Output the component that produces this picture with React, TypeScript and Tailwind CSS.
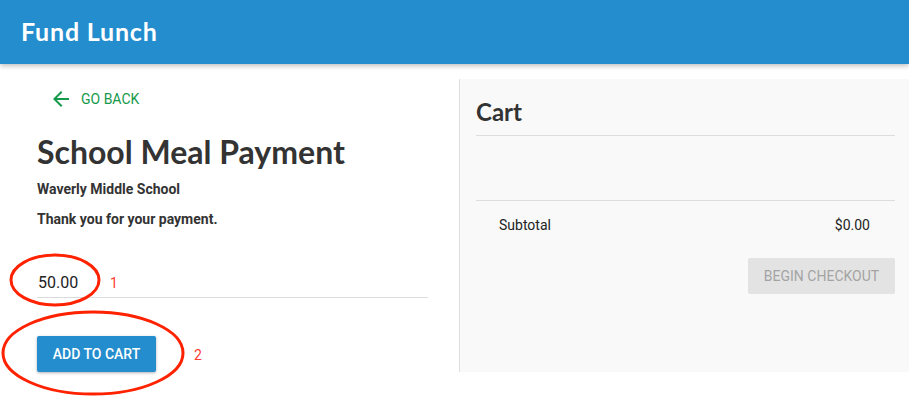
const heading = { fontFamily: '"Lato", "Open Sans", sans-serif' }
const body = { fontFamily: 'Roboto, "Liberation Sans", sans-serif' }

function BackArrow() {
  return (
    <svg width="24" height="24" viewBox="0 0 24 24" fill="currentColor">
      <path d="M20 11H7.83l5.59-5.59L12 4l-8 8 8 8 1.41-1.41L7.83 13H20v-2z" />
    </svg>
  )
}

export default function App() {
  return (
    <div className="relative w-[909px] h-[407px] overflow-hidden bg-white" style={body}>
      {/* Top bar */}
      <header className="h-16 bg-[#238dcd] flex items-center pl-[21px] shadow-[0_2px_5px_rgba(0,0,0,0.25)] relative z-10">
        <h1 className="text-white text-[25px] font-bold tracking-[0.8px]" style={heading}>
          Fund Lunch
        </h1>
      </header>

      <div className="flex">
        {/* Payment form */}
        <div className="w-[459px] pl-[37px] pr-[31px] pt-[21px]">
          <button className="flex items-center gap-[8px] pl-[12px] h-[28px] text-[#16994a] text-[14px] uppercase">
            <BackArrow />
            <span>Go Back</span>
          </button>

          <h2 className="mt-[19px] text-[32px] leading-[40px] font-bold text-[#333]" style={heading}>
            School Meal Payment
          </h2>
          <p className="mt-[9px] text-[14px] font-bold text-[#333] leading-[16px]">Waverly Middle School</p>
          <p className="mt-[14px] text-[14px] font-bold text-[#333] leading-[16px]">Thank you for your payment.</p>

          <div className="mt-[36px] border-b border-[#dcdcdc] h-[35px] flex items-center pt-[6px]">
            <span className="text-[16px] text-[#222] pl-px">50.00</span>
          </div>

          <button className="mt-[38px] h-[36px] w-[119px] bg-[#238dcd] text-white text-[14px] font-medium uppercase rounded-[2px] shadow-[0_1px_3px_rgba(0,0,0,0.3)]">
            Add to cart
          </button>
        </div>

        {/* Cart */}
        <aside className="mt-[15px] h-[293px] flex-1 bg-[#f9f9f9] border-l border-[#dedede] pl-[16px] pr-[14px]">
          <h2 className="pt-[19px] text-[24px] leading-[28px] font-bold text-[#333]" style={heading}>
            Cart
          </h2>
          <div className="mt-[9px] border-t border-[#ddd] h-[65px]" />
          <div className="border-t border-[#ddd] flex justify-between items-center pl-[23px] pr-[25px] pt-[14px] text-[14px] text-[#222]">
            <span>Subtotal</span>
            <span>$0.00</span>
          </div>
          <div className="flex justify-end mt-[22px]">
            <button className="h-[36px] w-[147px] bg-[#e3e3e3] text-[#a3a3a3] text-[14px] uppercase rounded-[2px]">
              Begin checkout
            </button>
          </div>
        </aside>
      </div>

      {/* Red annotations */}
      <svg className="absolute left-0 top-0 pointer-events-none" width="909" height="407">
        <ellipse cx="55" cy="280" rx="44" ry="25" fill="none" stroke="#ff2200" strokeWidth="3" />
        <ellipse cx="93" cy="353" rx="90" ry="41" fill="none" stroke="#ff2200" strokeWidth="3" />
      </svg>
      <span className="absolute left-[110px] top-[273px] text-[14px] text-[#ff3b30]">1</span>
      <span className="absolute left-[194px] top-[345px] text-[14px] text-[#ff3b30]">2</span>
    </div>
  )
}
